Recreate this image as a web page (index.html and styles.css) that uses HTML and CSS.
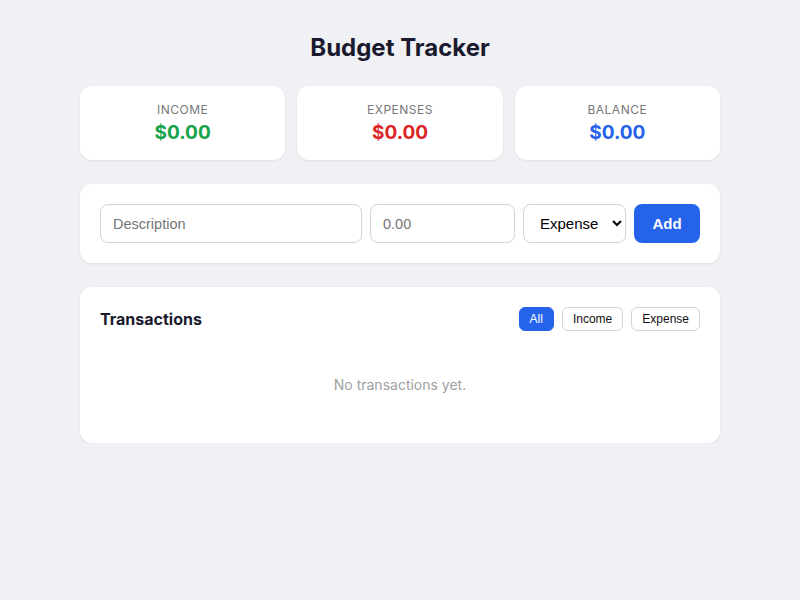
FILE: index.html
```html
<!DOCTYPE html>
<html lang="en">
<head>
<meta charset="utf-8">
<title>Budget Tracker</title>
<link rel="stylesheet" href="styles.css">
</head>
<body>
<div class="app">
  <h1 class="title">Budget Tracker</h1>
  <div class="summary">
    <div class="card stat">
      <div class="stat-label">Income</div>
      <div class="stat-value income">$0.00</div>
    </div>
    <div class="card stat">
      <div class="stat-label">Expenses</div>
      <div class="stat-value expense">$0.00</div>
    </div>
    <div class="card stat">
      <div class="stat-label">Balance</div>
      <div class="stat-value balance">$0.00</div>
    </div>
  </div>
  <form class="card entry">
    <input class="field desc" type="text" placeholder="Description">
    <input class="field amount" type="number" placeholder="0.00">
    <select class="field kind">
      <option>Expense</option>
      <option>Income</option>
    </select>
    <button class="add" type="button">Add</button>
  </form>
  <div class="card list">
    <div class="list-head">
      <h2 class="list-title">Transactions</h2>
      <div class="filters">
        <button class="filter active" type="button">All</button>
        <button class="filter" type="button">Income</button>
        <button class="filter" type="button">Expense</button>
      </div>
    </div>
    <p class="empty">No transactions yet.</p>
  </div>
</div>
</body>
</html>
```
FILE: styles.css
```css
* { box-sizing: border-box; }
body {
  margin: 0;
  background: #f0f1f5;
  font-family: Inter, "Liberation Sans", sans-serif;
  color: #1a1a2e;
}
.app {
  width: 640px;
  margin: 0 auto;
  padding-top: 34px;
}
.title {
  margin: 0 0 24px;
  font-size: 24px;
  line-height: 28px;
  font-weight: 700;
  text-align: center;
  color: #1a1a2e;
}
.card {
  background: #fff;
  border-radius: 12px;
  box-shadow: 0 1px 3px rgba(0,0,0,0.08);
}
.summary {
  display: grid;
  grid-template-columns: repeat(3, 1fr);
  gap: 12px;
}
.stat {
  padding: 16px;
  text-align: center;
  display: flex;
  flex-direction: column;
  gap: 4px;
}
.stat-label {
  font-size: 12px;
  line-height: 16px;
  text-transform: uppercase;
  letter-spacing: 0.5px;
  color: #777;
}
.stat-value {
  font-size: 19px;
  line-height: 22px;
  font-weight: 700;
}
.income { color: #16a34a; }
.expense { color: #dc2626; }
.balance { color: #2563eb; }
.entry {
  margin: 24px 0 0;
  padding: 20px;
  display: flex;
  gap: 8px;
  align-items: stretch;
}
.field {
  height: 39px;
  border: 1px solid #d4d4d8;
  border-radius: 8px;
  padding: 0 12px;
  font-family: "Liberation Sans", Arial, sans-serif;
  font-size: 14.5px;
  color: #111;
  background: #fff;
}
.field::placeholder { color: #757575; }
.desc { flex: 1; min-width: 0; }
.amount { width: 145px; }
.kind { width: 103px; padding: 0 4px 0 12px; color: #000; font-size: 15px; }
.add {
  width: 66px;
  height: 39px;
  border: none;
  border-radius: 8px;
  background: #2563eb;
  color: #fff;
  font-family: "Liberation Sans", Arial, sans-serif;
  font-size: 15px;
  font-weight: 700;
}
.list {
  margin-top: 24px;
  padding: 20px;
}
.list-head {
  display: flex;
  justify-content: space-between;
  align-items: center;
  height: 24px;
}
.list-title {
  margin: 0;
  font-size: 16px;
  font-weight: 700;
  color: #1a1a2e;
}
.filters {
  display: flex;
  gap: 8px;
}
.filter {
  height: 24px;
  padding: 0 10px;
  border: 1px solid #d4d4d8;
  border-radius: 6px;
  background: #fff;
  color: #111;
  font-family: "Liberation Sans", Arial, sans-serif;
  font-size: 12px;
}
.filter.active {
  background: #2563eb;
  border-color: #2563eb;
  color: #fff;
}
.empty {
  margin: 16px 0 0;
  padding: 30px 0;
  line-height: 16px;
  text-align: center;
  font-size: 14px;
  color: #a0a0a0;
}
```
